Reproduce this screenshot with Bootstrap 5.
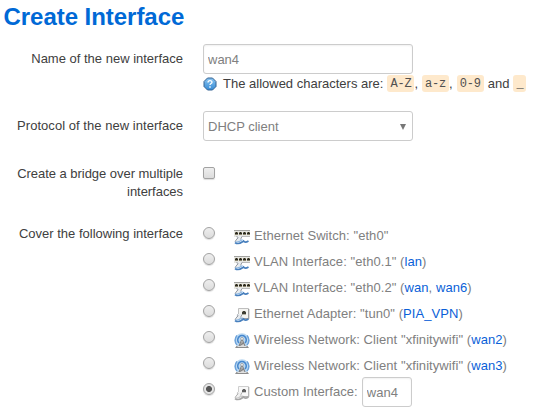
<!DOCTYPE html>
<html lang="en">
<head>
<meta charset="utf-8">
<meta name="viewport" content="width=device-width, initial-scale=1">
<title>Create Interface</title>
<link href="https://cdn.jsdelivr.net/npm/bootstrap@5.3.0/dist/css/bootstrap.min.css" rel="stylesheet">
<style>
body{font:13px/18px "Liberation Sans",Arial,sans-serif;color:#404040;background:#fff;min-height:416px}
h1{font-size:24px;line-height:34px;font-weight:700;color:#0069d6;padding-left:3.5px;letter-spacing:-.04px}
.field-label{width:183px;margin-right:20px;padding-top:6px}
.name-row{padding-top:2px;margin-bottom:18px}
.protocol-row{margin-bottom:18px}
.protocol-row .field-label{letter-spacing:.04px}
.bridge-label{letter-spacing:-.04px}
.form-control,.form-select{height:30px;width:210px;padding:0 4px;font-size:13px;line-height:18px;color:gray;border:1px solid #ccc;border-radius:3px;background:#fff;box-shadow:inset 0 1px 2px rgba(0,0,0,.06)}
.form-select{box-shadow:none;padding-top:1px}
.form-select svg{margin-right:2px}
.short-input{width:50px;margin-left:4px;letter-spacing:0}
.hint{height:19px;white-space:nowrap}
.hint svg{margin:1px 6px 0 0}
code{font:12px/18px "Liberation Mono",monospace;color:#505050;background:#fee9cc;border-radius:3px;padding:0 3px;height:17px;letter-spacing:-.2px}
.tick{appearance:none;width:12px;height:12px;border:1px solid #a2a2a2;border-radius:2px;background:linear-gradient(#eee,#dcdcdc);box-shadow:0 1px 1px #ddd;margin:0}
.tick.round{border-radius:50%;margin:0 19px 7px 0}
.tick.round:checked{background:radial-gradient(circle,#555 0 2.6px,#e4e4e4 3.4px)}
.choices{margin-top:-2px;letter-spacing:.07px}
.choice{height:26px;color:gray;white-space:nowrap}
.choice svg{width:16px;height:16px;margin:2px 4px 0 0}
.choice a{color:#0a5fd8;text-decoration:none}
.sprites{left:0;top:0}
</style>
<script src="https://cdn.jsdelivr.net/npm/bootstrap@5.3.0/dist/js/bootstrap.bundle.min.js"></script>
</head>
<body>
<svg class="sprites position-absolute" width="0" height="0" aria-hidden="true">
<defs>
<linearGradient id="helpfill" x2="0" y2="1"><stop stop-color="#8ac5f1"/><stop offset="1" stop-color="#378bd5"/></linearGradient>
<symbol id="hand" viewBox="0 0 16 16"><path d="M3 7h5L7 10l-3 3H1.500z" fill="#e8ebee"/><path d="M3.500 7.500L4 9L2 11L1 13M8 7.500L6.500 10.500" fill="none" stroke="#8d9298" stroke-width=".9"/><path d="M1 13.500C3 15 6 14.500 8.500 12.800L9.500 12C10.500 13.500 12 13.500 14.500 12" fill="none" stroke="#477fbd" stroke-width="1.700"/><path d="M1.500 12.800C4 13.500 6 12.500 8.500 10.500" fill="none" stroke="#8fb9e3" stroke-width="1.200"/></symbol>
<symbol id="switch" viewBox="0 0 16 16"><path d="M0 1h16v7H0z" fill="#e6e6e1"/><path d="M0 1.500h16" stroke="#a3a3a0"/><g shape-rendering="crispEdges"><path d="M1 3h3v3H1zM5 3h3v3H5zM9 3h3v3H9zM13 3h3v3h-3z" fill="#86806a"/><path d="M2 3h1v2H2zM6 3h1v2H6zM10 3h1v2h-1zM14 3h1v2h-1zM1 4h3v1H1zM5 4h3v1H5zM9 4h3v1H9zM13 4h3v1h-3z" fill="#29281e"/></g><path d="M2 7.500h14" stroke="#bbb"/><use href="#hand"/></symbol>
<symbol id="adapter" viewBox="0 0 16 16"><path d="M4.500 1.500h10v10h-10z" fill="#f4f4f1" stroke="#bebebe"/><path d="M14.800 2v9.800H7" fill="none" stroke="#929292"/><path d="M8 4h4v4H8z" fill="#b5b4a4"/><path d="M9 4h2v1h1v2H8V5h1z" fill="#3e3e34"/><use href="#hand"/></symbol>
<symbol id="wireless" viewBox="0 0 16 16"><circle cx="8" cy="7.500" r="7.300" fill="#bad8f2"/><path d="M3 12A7 7 0 0 1 3 2.500M13 12A7 7 0 0 0 13 2.500" fill="none" stroke="#6da3db" stroke-width="1.500"/><path d="M5 10a4.300 4.300 0 1 1 6 0" fill="none" stroke="#4687cd" stroke-width="1.500"/><path d="M8 6l3 7H5z" fill="#d8d8d8"/><path d="M8 6L5 13M8 6l3 7M6 10h4M5 13l5-3" fill="none" stroke="#858585" stroke-width="1.100"/><circle cx="8" cy="5.800" r="1.400" fill="#eee" stroke="#888" stroke-width=".6"/><path d="M2.500 13h11l1.500 2H1z" fill="#8d8d8d"/><path d="M3.500 13.500h9" stroke="#e0e0e0"/></symbol>
<symbol id="custom" viewBox="0 0 16 16"><path d="M4.500 1.500h10v10h-10z" fill="#f8f8f8" stroke="#cecece"/><path d="M14.800 2v9.800H7" fill="none" stroke="#adadad"/><path d="M8 4h4v4H8z" fill="#ccc"/><path d="M9 4h2v1h1v2H8V5h1z" fill="#606060"/><path d="M3 7h5L7 10l-3 3H1.500z" fill="#f0f0f0"/><path d="M3.500 7.500L4 9L2 11L1 13M8 7.500L6.500 10.500" fill="none" stroke="#aaa" stroke-width=".9"/><path d="M1 13.500C3 15 6 14.500 8.500 12.800L9.500 12C10.500 13.500 12 13.500 14.500 12" fill="none" stroke="#a5a5a5" stroke-width="1.700"/><path d="M1.500 12.800C4 13.500 6 12.500 8.500 10.500" fill="none" stroke="#ccc" stroke-width="1.200"/></symbol>
</defs></svg>
<h1 class="m-0">Create Interface</h1>
<form class="pt-2">
<div class="d-flex name-row">
 <label class="field-label text-end flex-shrink-0">Name of the new interface</label>
 <div><input class="form-control" value="wan4">
 <div class="hint d-flex align-items-center"><svg width="14" height="14" viewBox="0 0 14 14"><path d="M4.500 1h5L13 4.500v5L9.500 13h-5L1 9.500V4.500z" fill="url(#helpfill)" stroke="#356292"/><path d="M5 5.400C5 3 9 3 9 5.200C9 6.500 7 6.500 7 8" fill="none" stroke="#fff" stroke-width="1.300"/><path d="M6.300 9.300h1.400v1.400H6.300z" fill="#fff"/></svg><span>The allowed characters are:</span><code class="ms-1">A-Z</code>,<code class="ms-1">a-z</code>,<code class="ms-1">0-9</code><span class="ms-1">and</span><code class="ms-1">_</code></div></div>
</div>
<div class="d-flex protocol-row">
 <label class="field-label text-end flex-shrink-0">Protocol of the new interface</label>
 <div class="form-select d-flex align-items-center justify-content-between" role="combobox"><span>DHCP client</span><svg width="6" height="6" viewBox="0 0 6 6"><path d="M0 0h6L3 6z" fill="#777"/></svg></div>
</div>
<div class="d-flex">
 <label class="field-label bridge-label text-end flex-shrink-0">Create a bridge over multiple interfaces</label>
 <input type="checkbox" class="tick mt-2">
</div>
<div class="d-flex pt-3 mt-2">
 <label class="field-label text-end flex-shrink-0 pt-0">Cover the following interface</label>
 <div class="choices">
 <div class="choice d-flex align-items-center"><input class="tick round" type="radio" name="iface"><svg><use href="#switch"/></svg><span>Ethernet Switch: "eth0"</span></div>
 <div class="choice d-flex align-items-center"><input class="tick round" type="radio" name="iface"><svg><use href="#switch"/></svg><span>VLAN Interface: "eth0.1" (<a href="#">lan</a>)</span></div>
 <div class="choice d-flex align-items-center"><input class="tick round" type="radio" name="iface"><svg><use href="#switch"/></svg><span>VLAN Interface: "eth0.2" (<a href="#">wan</a>, <a href="#">wan6</a>)</span></div>
 <div class="choice d-flex align-items-center"><input class="tick round" type="radio" name="iface"><svg><use href="#adapter"/></svg><span>Ethernet Adapter: "tun0" (<a href="#">PIA_VPN</a>)</span></div>
 <div class="choice d-flex align-items-center"><input class="tick round" type="radio" name="iface"><svg><use href="#wireless"/></svg><span>Wireless Network: Client "xfinitywifi" (<a href="#">wan2</a>)</span></div>
 <div class="choice d-flex align-items-center"><input class="tick round" type="radio" name="iface"><svg><use href="#wireless"/></svg><span>Wireless Network: Client "xfinitywifi" (<a href="#">wan3</a>)</span></div>
 <div class="choice d-flex align-items-center"><input class="tick round" type="radio" name="iface" checked><svg><use href="#custom"/></svg><span>Custom Interface:</span><input class="form-control short-input" value="wan4"></div>
 </div>
</div>
</form>
</body>
</html>
